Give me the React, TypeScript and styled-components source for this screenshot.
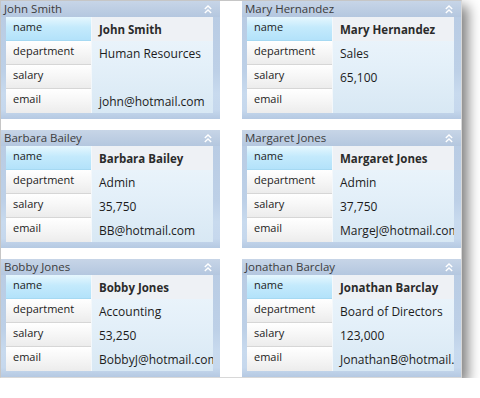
import styled, { createGlobalStyle } from "styled-components";

const GlobalStyle = createGlobalStyle`
    body {
        margin: 0;
        background: #ffffff;
        font-family: "Open Sans", "Liberation Sans", sans-serif;
    }
`;

type Employee = {
    name: string;
    department: string;
    salary: string;
    email: string;
};

const employees: Employee[] = [
    { name: "John Smith", department: "Human Resources", salary: "", email: "john@hotmail.com" },
    { name: "Mary Hernandez", department: "Sales", salary: "65,100", email: "" },
    { name: "Barbara Bailey", department: "Admin", salary: "35,750", email: "BB@hotmail.com" },
    { name: "Margaret Jones", department: "Admin", salary: "37,750", email: "MargeJ@hotmail.com" },
    { name: "Bobby Jones", department: "Accounting", salary: "53,250", email: "BobbyJ@hotmail.com" },
    { name: "Jonathan Barclay", department: "Board of Directors", salary: "123,000", email: "JonathanB@hotmail.com" },
];

const fields = ["name", "department", "salary", "email"] as const;

// --- STYLED COMPONENTS ---

const Frame = styled.div`
    width: 460px;
    border: 1px solid #c6c6c6;
    border-right-color: #d8d8d8;
    border-bottom-color: #d8d8d8;
    background: #ffffff;
    box-shadow: 6px 6px 12px rgba(0, 0, 0, 0.5);
    display: grid;
    grid-template-columns: 219px 219px;
    column-gap: 22px;
    row-gap: 11px;
`;

const Card = styled.section`
    height: 118px;
    display: flex;
    flex-direction: column;
    background: linear-gradient(
        #b8cbe3 0%,
        #bdd0e7 60%,
        #c8daee 78%,
        #c6d8ed 92%,
        #b5c9e2 100%
    );
`;

const Header = styled.div`
    height: 16px;
    display: flex;
    align-items: center;
    justify-content: space-between;
    padding: 0 8px 0 3px;
    background: linear-gradient(#c7d5e7, #b4c7df);
    color: #3c3c3c;
    font-size: 11.5px;
    line-height: 16px;
`;

const Table = styled.div`
    margin: 0 6px 0 5px;
    display: grid;
    grid-template-columns: 86px 121px;
    height: 96px;
`;

const LabelColumn = styled.div`
    display: flex;
    flex-direction: column;
    border-right: 1px solid #f4f8fb;
`;

const Label = styled.div<{ $active?: boolean }>`
    height: 24px;
    box-sizing: border-box;
    padding: 1px 0 0 7px;
    font-size: 11px;
    line-height: 18px;
    color: #1c1c1c;
    border-bottom: 1px solid ${(p) => (p.$active ? "#a6d9f2" : "#d6d6d6")};
    background: ${(p) =>
        p.$active
            ? "linear-gradient(#e6f7fe, #c4eafc 45%, #b3e2fa)"
            : "linear-gradient(#ffffff, #f7f7f7 45%, #ececec)"};

    &:last-child {
        border-bottom: none;
    }
`;

const ValueColumn = styled.div`
    display: flex;
    flex-direction: column;
    background: linear-gradient(#eef6fc, #e4f0f9 50%, #d8e8f4);
`;

const Value = styled.div<{ $title?: boolean }>`
    height: 24px;
    box-sizing: border-box;
    padding: ${(p) => (p.$title ? "4px 0 0 7px" : "4px 0 0 7px")};
    font-size: ${(p) => (p.$title ? "11.5px" : "12px")};
    line-height: 18px;
    font-weight: ${(p) => (p.$title ? 700 : 400)};
    color: ${(p) => (p.$title ? "#2b2b2b" : "#1c1c1c")};
    background: ${(p) => (p.$title ? "#eef1f5" : "transparent")};
    white-space: nowrap;
    overflow: hidden;
`;

const CollapseIcon = () => (
    <svg width="8" height="9" viewBox="0 0 8 9">
        <polyline points="0.8,4 4,1 7.2,4" fill="none" stroke="#ffffff" strokeWidth="1.4" />
        <polyline points="0.8,8 4,5 7.2,8" fill="none" stroke="#ffffff" strokeWidth="1.4" />
    </svg>
);

// --- PAGE COMPONENT ---

function EmployeeCard({ emp }: { emp: Employee }) {
    return (
        <Card>
            <Header>
                <span>{emp.name}</span>
                <CollapseIcon />
            </Header>
            <Table>
                <LabelColumn>
                    {fields.map((f, i) => (
                        <Label key={f} $active={i === 0}>{f}</Label>
                    ))}
                </LabelColumn>
                <ValueColumn>
                    {fields.map((f, i) => (
                        <Value key={f} $title={i === 0}>{emp[f]}</Value>
                    ))}
                </ValueColumn>
            </Table>
        </Card>
    );
}

export default function App() {
    return (
        <>
            <GlobalStyle />
            <Frame>
                {employees.map((emp) => (
                    <EmployeeCard key={emp.name} emp={emp} />
                ))}
            </Frame>
        </>
    );
}
